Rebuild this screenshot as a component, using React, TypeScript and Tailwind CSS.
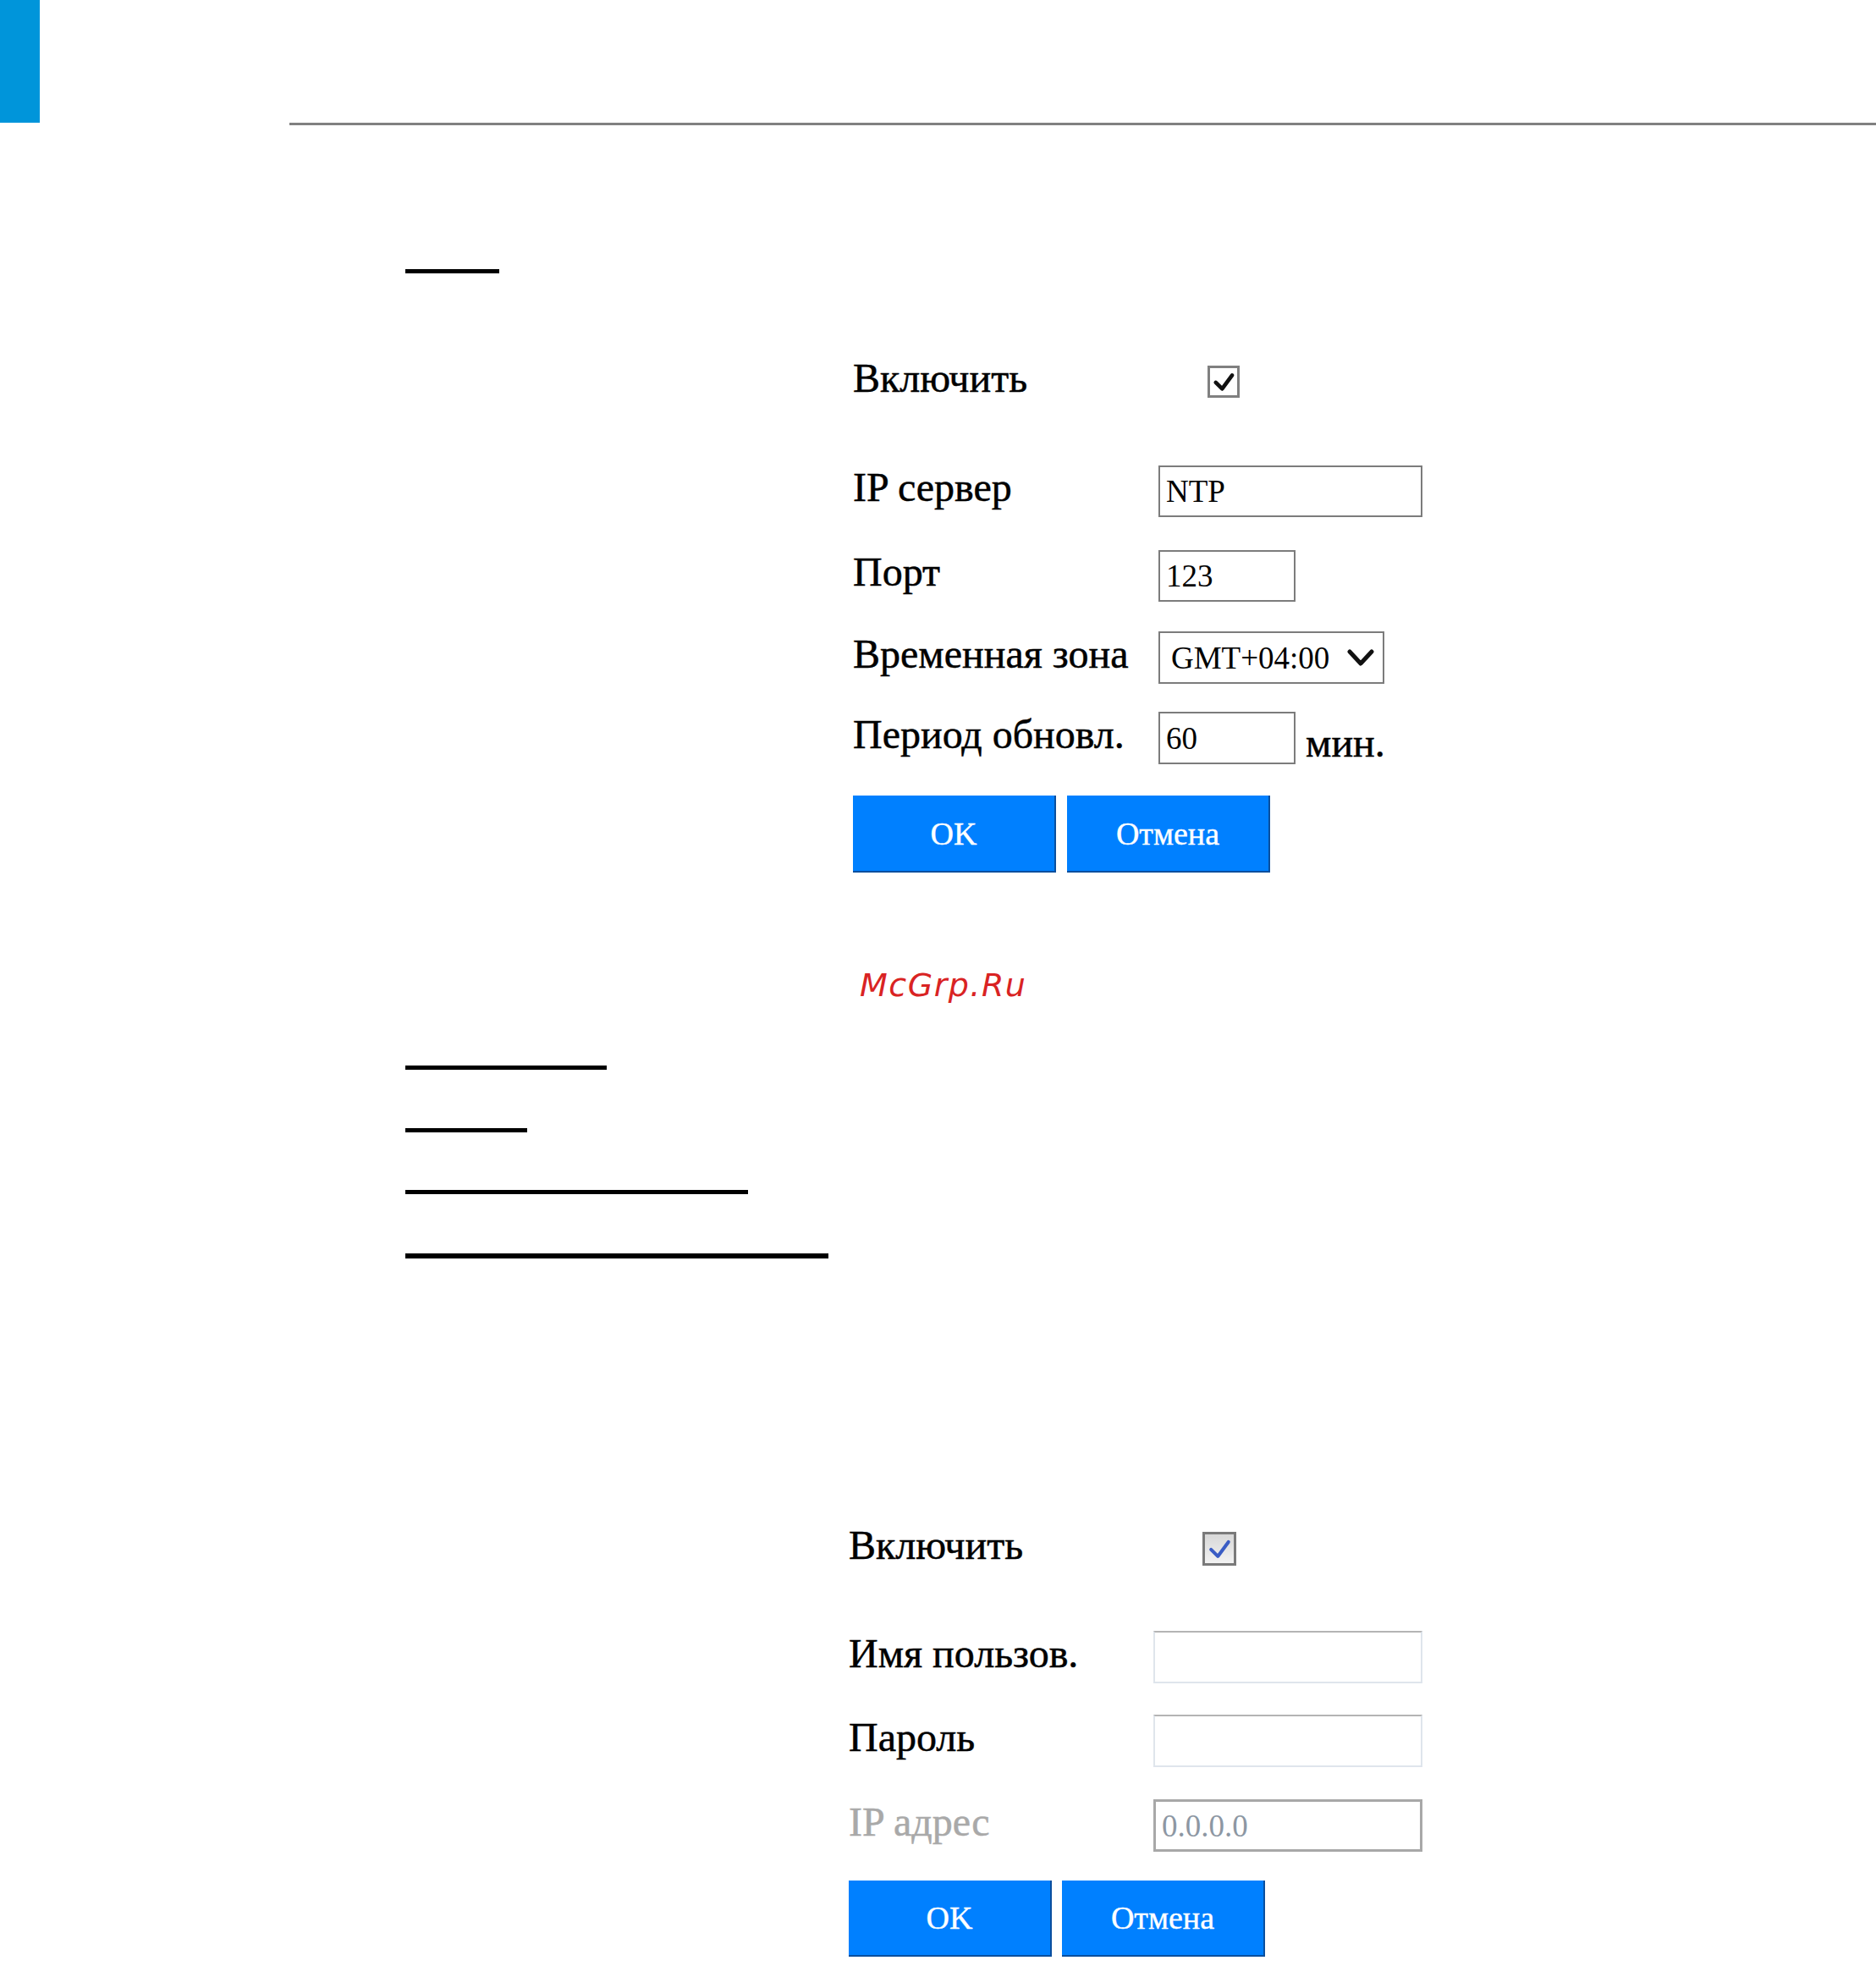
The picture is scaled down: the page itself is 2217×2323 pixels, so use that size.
import React from "react";

function Tick({ color, width }: { color: string; width: number }) {
  return (
    <svg viewBox="0 0 38 38" className="h-full w-full">
      <path d="M8 20 L17 29 L31 10" fill="none" stroke={color} strokeWidth={width} strokeLinecap="round" strokeLinejoin="round" />
    </svg>
  );
}

const labelCls = "pb-[8px] text-[48px] leading-none [-webkit-text-stroke:0.5px_currentColor]";

function Row({ label, children, muted }: { label: string; children: React.ReactNode; muted?: boolean }) {
  return (
    <div className="flex h-[62px] items-center">
      <div className={`w-[361px] ${labelCls} ${muted ? "text-[#a9a9a9]" : "text-black"}`}>{label}</div>
      {children}
    </div>
  );
}

function Btn({ children, h }: { children: React.ReactNode; h: string }) {
  return (
    <button
      className={`${h} w-[240px] border-r-2 border-b-2 border-[#0a4f9e] bg-[#0080ff] text-[38px] leading-none text-white [-webkit-text-stroke:0.4px_white]`}
    >
      {children}
    </button>
  );
}

const inputText = "flex h-full items-center text-[37px] leading-none";

export default function App() {
  return (
    <div className="min-h-[2323px] w-[2217px] bg-white font-['Liberation_Serif',serif] text-black">
      {/* header */}
      <div className="h-[145px] w-[47px] bg-[#0095da]" />
      <div className="ml-[342px] h-[3px] bg-[#808080]" />

      <div className="ml-[479px] mt-[170px] h-[5px] w-[111px] bg-black" />

      {/* NTP form */}
      <div className="ml-[1008px] mt-[108px] flex flex-col">
        <div className="flex h-[39px] items-center">
          <div className={`w-[361px] ${labelCls}`}>Включить</div>
          <div className="ml-[58px] h-[38px] w-[38px] border-[3px] border-[#808080] bg-white">
            <Tick color="#111" width={5.5} />
          </div>
        </div>

        <div className="mt-[79px]">
          <Row label="IP сервер">
            <div className="h-[61px] w-[312px] border-2 border-[#7c7c7c] pl-[7px]">
              <span className={inputText}>NTP</span>
            </div>
          </Row>
        </div>
        <div className="mt-[38px]">
          <Row label="Порт">
            <div className="h-[61px] w-[162px] border-2 border-[#7c7c7c] pl-[7px]">
              <span className={inputText}>123</span>
            </div>
          </Row>
        </div>
        <div className="mt-[35px]">
          <Row label="Временная зона">
            <div className="flex h-[62px] w-[267px] items-center justify-between border-2 border-[#7c7c7c] pl-[13px] pr-[10px]">
              <span className="text-[37px] leading-none">GMT+04:00</span>
              <svg viewBox="0 0 32 22" className="h-[22px] w-[32px]">
                <path d="M3 4 L16 18 L29 4" fill="none" stroke="#111" strokeWidth="5" strokeLinecap="round" strokeLinejoin="round" />
              </svg>
            </div>
          </Row>
        </div>
        <div className="mt-[33px]">
          <Row label="Период обновл.">
            <div className="h-[62px] w-[162px] border-2 border-[#7c7c7c] pl-[7px]">
              <span className={inputText}>60</span>
            </div>
            <span className="ml-[12px] mt-[12px] text-[48px] leading-none [-webkit-text-stroke:0.5px_currentColor]">мин.</span>
          </Row>
        </div>

        <div className="mt-[37px] flex gap-[13px]">
          <Btn h="h-[91px]">OK</Btn>
          <Btn h="h-[91px]">Отмена</Btn>
        </div>

        <div className="ml-[8px] mt-[114px] h-[38px] font-['DejaVu_Sans',sans-serif] text-[38px] italic leading-none tracking-[1.5px] text-[#d92323]">
          McGrp.Ru
        </div>
      </div>

      {/* underlined headings */}
      <div className="ml-[479px] flex flex-col">
        <div className="mt-[76px] h-[5px] w-[238px] bg-black" />
        <div className="mt-[69px] h-[5px] w-[144px] bg-black" />
        <div className="mt-[68px] h-[5px] w-[405px] bg-black" />
        <div className="mt-[70px] h-[6px] w-[500px] bg-black" />
      </div>

      {/* PPPoE form */}
      <div className="ml-[1003px] mt-[323px] flex flex-col">
        <div className="flex h-[39px] items-center">
          <div className={`w-[360px] ${labelCls}`}>Включить</div>
          <div className="ml-[58px] h-[40px] w-[40px] border-[3px] border-[#7a7a7a] bg-gradient-to-b from-[#d8d8d8] to-[#f2f2f2]">
            <Tick color="#3a5cc4" width={4.5} />
          </div>
        </div>

        <div className="mt-[78px]">
          <Row label="Имя пользов.">
            <div className="ml-[-1px] h-[62px] w-[318px] border-2 border-[#dfe5ec] border-t-[#b4b4b4]" />
          </Row>
        </div>
        <div className="mt-[37px]">
          <Row label="Пароль">
            <div className="ml-[-1px] h-[62px] w-[318px] border-2 border-[#dfe5ec] border-t-[#b4b4b4]" />
          </Row>
        </div>
        <div className="mt-[38px]">
          <Row label="IP адрес" muted>
            <div className="ml-[-1px] h-[62px] w-[318px] border-[3px] border-[#a8a8a8] pl-[7px] text-[#8d97a3]">
              <span className={inputText}>0.0.0.0</span>
            </div>
          </Row>
        </div>

        <div className="mt-[34px] flex gap-[12px]">
          <Btn h="h-[90px]">OK</Btn>
          <Btn h="h-[90px]">Отмена</Btn>
        </div>
      </div>
    </div>
  );
}
